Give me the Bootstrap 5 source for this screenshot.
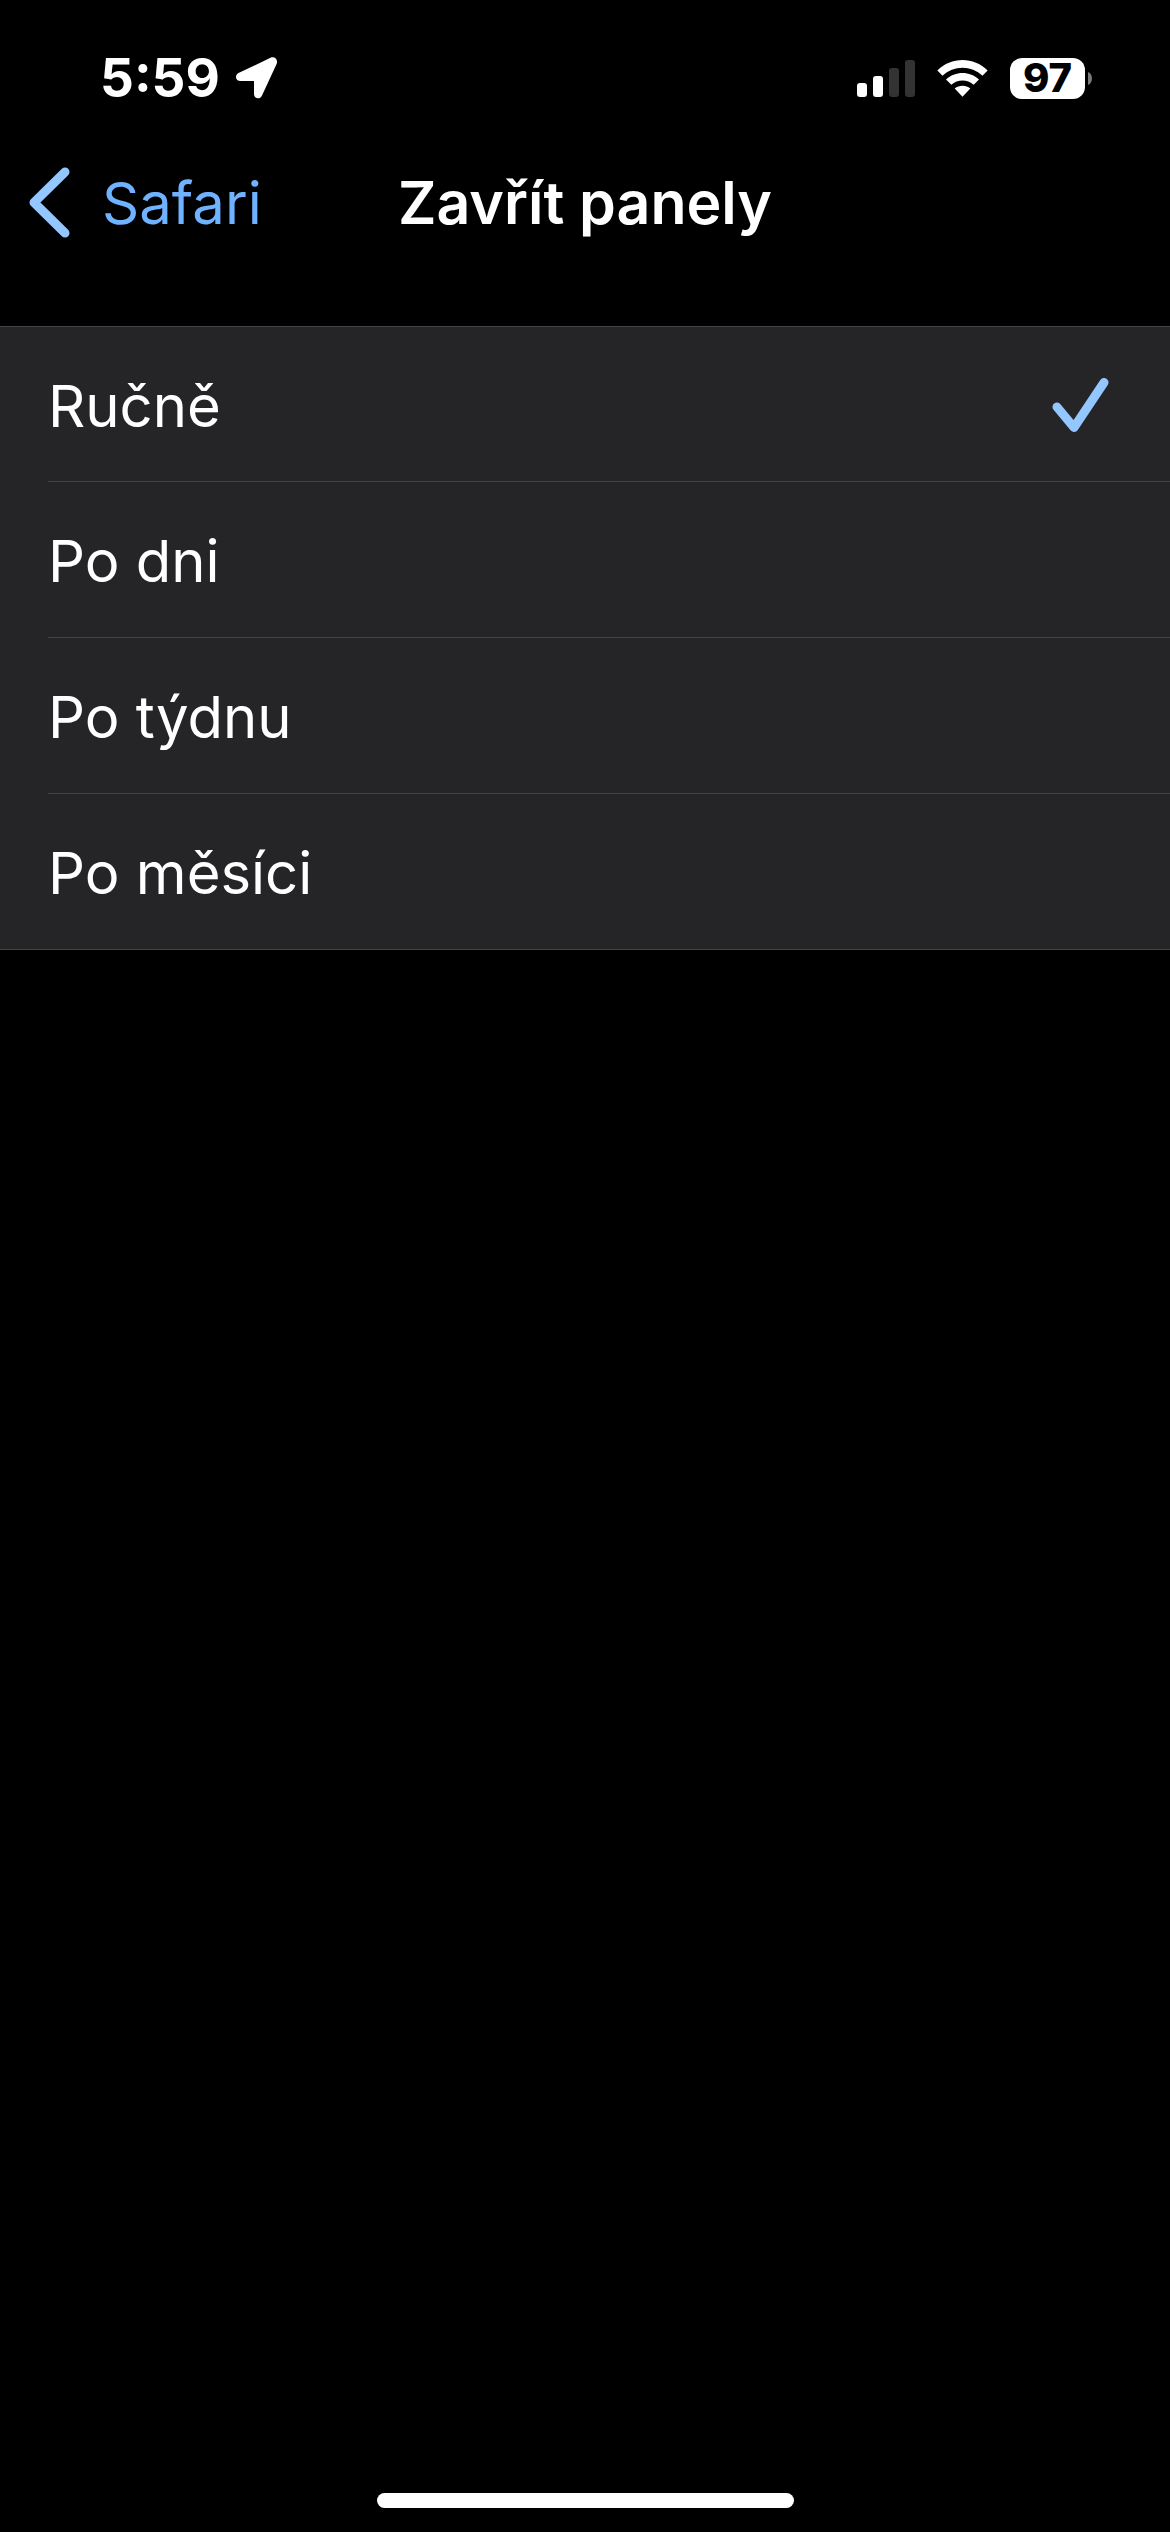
<!DOCTYPE html>
<html lang="cs">
<head>
<meta charset="utf-8">
<meta name="viewport" content="width=device-width, initial-scale=1">
<title>Zavřít panely</title>
<link href="https://cdn.jsdelivr.net/npm/bootstrap@5.3.0/dist/css/bootstrap.min.css" rel="stylesheet">
<style>
  body { background: #000; color: #fff; font-family: Inter, "Liberation Sans", sans-serif; font-size: 58px; line-height: 72px; }
  svg { display: block; flex: none; }
  .status-bar { height: 156px; padding: 0 78px 0 100px; }
  .status-time { font-size: 53px; font-weight: 700; gap: 16px; }
  .status-icons { gap: 22px; }
  .battery-body { width: 75px; height: 41px; border-radius: 12px; background: #fff; color: #000; font-size: 40px; font-weight: 800; line-height: 40px; }
  .battery-wrap { gap: 3px; }
  .title-bar { padding: 11px 28px 87px; }
  .title-bar h1 { font-size: 59px; font-weight: 600; line-height: 72px; }
  .back-link { color: #6fb2ff; gap: 30px; }
  .options { --bs-list-group-bg: #252527; --bs-list-group-color: #fff; border-block: 1px solid #444446; background: #252527; }
  .option-row { height: 156px; padding: 0 0 0 48px; }
  .option-row:first-child, .option-row:last-child { height: 155px; }
  .option-line { padding: 3px 61px 0 0; }
  .option-row:not(:last-child) .option-line { border-bottom: 1px solid #444446; }
  .option-row .tick { visibility: hidden; }
  .option-row input:checked ~ .option-line .tick { visibility: visible; }
  .home-indicator { width: 417px; height: 15px; margin-bottom: 24px; }
</style>
<script src="https://cdn.jsdelivr.net/npm/bootstrap@5.3.0/dist/js/bootstrap.bundle.min.js"></script>
</head>
<body>
<div class="d-flex flex-column min-vh-100">
  <header>
    <div class="status-bar d-flex justify-content-between align-items-center">
      <div class="status-time d-flex align-items-center">
        <span>5:59</span>
        <svg width="42" height="42" viewBox="0 0 42 42" fill="#fff" aria-hidden="true"><path d="M34.500 .8C38.500-1 42.500 2.500 40.600 7L26 38.500C24 43 18 41.800 18 37V24H4.500C-.8 24-1.600 18 3 15.800Z"/></svg>
      </div>
      <div class="status-icons d-flex align-items-center">
        <svg width="58" height="37" viewBox="0 0 58 37" fill="#fff" aria-hidden="true">
          <rect y="23" width="10" height="14" rx="3"/><rect x="16" y="16" width="10" height="21" rx="3"/>
          <g fill="#333"><rect x="32" y="8" width="10" height="29" rx="3"/><rect x="48" width="10" height="37" rx="3"/></g>
        </svg>
        <svg width="51" height="37" viewBox="0 0 51 37" fill="#fff" aria-hidden="true">
          <path d="M.4 10.500C14-3.500 37-3.500 50.600 10.500L45.500 15.700C34.500 5 16.500 5 5.500 15.700Z"/>
          <path d="M9 19.500C18 10.800 33 10.800 42 19.500L36.700 24.700C30.500 19 20.500 19 14.300 24.700Z"/>
          <path d="M17.700 28.500C22 24.800 29 24.800 33.300 28.500L25.500 36.700Z"/>
        </svg>
        <div class="battery-wrap d-flex align-items-center">
          <div class="battery-body text-center">97</div>
          <svg width="4" height="13" viewBox="0 0 4 13" aria-hidden="true"><path d="M0 0C5.300 2 5.300 11 0 13Z" fill="#7a7a7a"/></svg>
        </div>
      </div>
    </div>
    <nav class="title-bar row gx-0 align-items-center">
      <div class="col d-flex">
        <a href="#" class="back-link d-flex align-items-center text-decoration-none">
          <svg width="44" height="72" viewBox="0 0 44 72" fill="none" stroke="#94c6ff" stroke-width="9" stroke-linecap="round" stroke-linejoin="round" aria-hidden="true"><path d="M37 5L6 35.500L37 66"/></svg>
          <span>Safari</span>
        </a>
      </div>
      <h1 class="col-auto m-0">Zavřít panely</h1>
      <div class="col"></div>
    </nav>
  </header>
  <main class="flex-grow-1">
    <div class="options list-group list-group-flush" role="radiogroup" aria-label="Zavřít panely">
      <label class="option-row list-group-item border-0 d-flex">
        <input type="radio" name="close" class="visually-hidden" checked>
        <span class="option-line d-flex flex-fill justify-content-between align-items-center">Ručně
          <svg class="tick" width="58" height="56" viewBox="0 0 58 56" fill="none" stroke="#94c6ff" stroke-width="9" stroke-linecap="round" stroke-linejoin="round" aria-hidden="true"><path d="M6 29L23 49.500L53 4.500"/></svg>
        </span>
      </label>
      <label class="option-row list-group-item border-0 d-flex">
        <input type="radio" name="close" class="visually-hidden">
        <span class="option-line d-flex flex-fill justify-content-between align-items-center">Po dni
          <svg class="tick" width="58" height="56" viewBox="0 0 58 56" fill="none" stroke="#94c6ff" stroke-width="9" stroke-linecap="round" stroke-linejoin="round" aria-hidden="true"><path d="M6 29L23 49.500L53 4.500"/></svg>
        </span>
      </label>
      <label class="option-row list-group-item border-0 d-flex">
        <input type="radio" name="close" class="visually-hidden">
        <span class="option-line d-flex flex-fill justify-content-between align-items-center">Po týdnu
          <svg class="tick" width="58" height="56" viewBox="0 0 58 56" fill="none" stroke="#94c6ff" stroke-width="9" stroke-linecap="round" stroke-linejoin="round" aria-hidden="true"><path d="M6 29L23 49.500L53 4.500"/></svg>
        </span>
      </label>
      <label class="option-row list-group-item border-0 d-flex">
        <input type="radio" name="close" class="visually-hidden">
        <span class="option-line d-flex flex-fill justify-content-between align-items-center">Po měsíci
          <svg class="tick" width="58" height="56" viewBox="0 0 58 56" fill="none" stroke="#94c6ff" stroke-width="9" stroke-linecap="round" stroke-linejoin="round" aria-hidden="true"><path d="M6 29L23 49.500L53 4.500"/></svg>
        </span>
      </label>
    </div>
  </main>
  <div class="home-indicator rounded-pill bg-white mx-auto"></div>
</div>
</body>
</html>
